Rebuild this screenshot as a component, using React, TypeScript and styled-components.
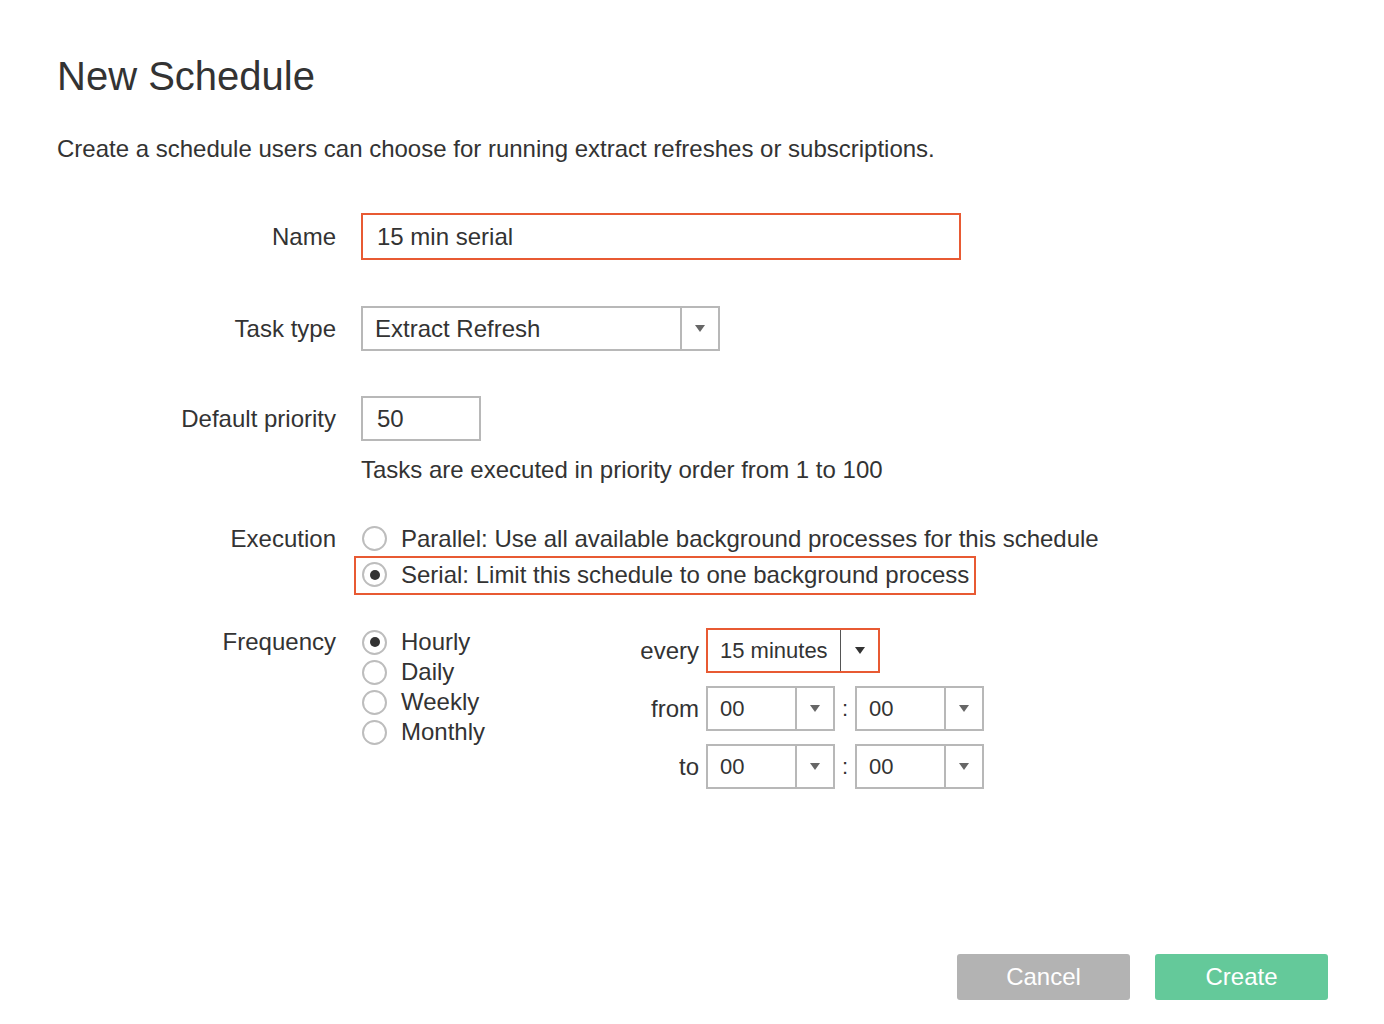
import styled, { createGlobalStyle } from 'styled-components';

const GlobalStyle = createGlobalStyle`
  html, body {
    margin: 0;
    padding: 0;
    background: #fff;
  }
  * {
    box-sizing: border-box;
  }
`;

const Page = styled.div`
  min-height: 100vh;
  display: flex;
  flex-direction: column;
  padding: 52px 56px 24px 57px;
  font-family: 'Liberation Sans', Arial, sans-serif;
  color: #333;
`;

const Title = styled.h1`
  margin: 0;
  font-size: 40px;
  line-height: 48px;
  font-weight: normal;
  color: #333;
`;

const Subtitle = styled.p`
  margin: 35px 0 0;
  font-size: 24px;
  line-height: 28px;
`;

const Form = styled.div`
  display: flex;
  flex-direction: column;
  margin-top: 50px;
`;

const Row = styled.div<{ $top?: number; $align?: string }>`
  display: grid;
  grid-template-columns: 279px 1fr;
  column-gap: 25px;
  align-items: ${({ $align }) => $align || 'center'};
  margin-top: ${({ $top }) => $top ?? 0}px;
`;

const Label = styled.div<{ $lh?: number }>`
  text-align: right;
  font-size: 24px;
  line-height: ${({ $lh }) => $lh || 28}px;
  white-space: nowrap;
`;

const TextBox = styled.div<{ $width: number; $height: number; $highlight?: boolean }>`
  width: ${({ $width }) => $width}px;
  height: ${({ $height }) => $height}px;
  border: 2px solid ${({ $highlight }) => ($highlight ? '#e85a33' : '#b8b8b8')};
  padding: 0 14px;
  display: flex;
  align-items: center;
  font-size: 24px;
  background: #fff;
`;

const Help = styled.div`
  margin-top: 15px;
  font-size: 24px;
  line-height: 28px;
`;

const SelectBox = styled.div<{ $width: number; $highlight?: boolean }>`
  width: ${({ $width }) => $width}px;
  height: 45px;
  display: flex;
  border: 2px solid ${({ $highlight }) => ($highlight ? '#e85a33' : '#b8b8b8')};
  background: #fff;
`;

const SelectValue = styled.div<{ $size: number }>`
  flex: 1;
  display: flex;
  align-items: center;
  padding-left: 12px;
  font-size: ${({ $size }) => $size}px;
`;

const SelectArrow = styled.div<{ $highlight?: boolean }>`
  width: 38px;
  display: flex;
  align-items: center;
  justify-content: center;
  border-left: ${({ $highlight }) => ($highlight ? '1.5px solid #555' : '2px solid #b8b8b8')};

  &::after {
    content: '';
    width: 0;
    height: 0;
    border-left: 5px solid transparent;
    border-right: 5px solid transparent;
    border-top: 7px solid ${({ $highlight }) => ($highlight ? '#333' : '#666')};
  }
`;

const Options = styled.div`
  display: flex;
  flex-direction: column;
  align-items: flex-start;
`;

const Option = styled.div<{ $height: number; $highlight?: boolean }>`
  display: flex;
  align-items: center;
  gap: 14px;
  height: ${({ $height }) => $height}px;
  font-size: 24px;
  white-space: nowrap;
  ${({ $highlight }) =>
    $highlight
      ? `
    border: 2px solid #e85a33;
    margin-left: -7px;
    padding: 0 5px 2px 5px;
  `
      : ''}
`;

const Radio = styled.span<{ $checked?: boolean }>`
  width: 25px;
  height: 25px;
  margin-left: 1px;
  border-radius: 50%;
  border: 2px solid #bdbdbd;
  display: flex;
  align-items: center;
  justify-content: center;
  flex-shrink: 0;

  &::after {
    content: '';
    width: 10px;
    height: 10px;
    border-radius: 50%;
    background: ${({ $checked }) => ($checked ? '#333' : 'transparent')};
  }
`;

const FrequencyBody = styled.div`
  display: flex;
  align-items: flex-start;
`;

const FrequencyList = styled(Options)`
  width: 270px;
`;

const TimeGrid = styled.div`
  display: grid;
  grid-template-columns: 68px auto;
  column-gap: 7px;
  row-gap: 13px;
  align-items: center;
  margin-top: 1px;
`;

const TimeLabel = styled.div`
  text-align: right;
  font-size: 24px;
`;

const TimePair = styled.div`
  display: flex;
  align-items: center;
`;

const Colon = styled.div`
  width: 20px;
  text-align: center;
  font-size: 22px;
`;

const Footer = styled.div`
  margin-top: auto;
  display: flex;
  justify-content: flex-end;
  gap: 25px;
`;

const Button = styled.button<{ $primary?: boolean }>`
  width: 173px;
  height: 46px;
  border: none;
  border-radius: 3px;
  background: ${({ $primary }) => ($primary ? '#64c99a' : '#b3b3b3')};
  color: #fff;
  font-family: 'Liberation Sans', Arial, sans-serif;
  font-size: 24px;
  cursor: pointer;
`;

interface SelectProps {
  value: string;
  width: number;
  size?: number;
  highlight?: boolean;
}

const Select = ({ value, width, size = 24, highlight }: SelectProps) => (
  <SelectBox $width={width} $highlight={highlight}>
    <SelectValue $size={size}>{value}</SelectValue>
    <SelectArrow $highlight={highlight} />
  </SelectBox>
);

const HourMinute = () => (
  <TimePair>
    <Select value="00" width={129} size={22} />
    <Colon>:</Colon>
    <Select value="00" width={129} size={22} />
  </TimePair>
);

const App = () => {
  const frequencies = ['Hourly', 'Daily', 'Weekly', 'Monthly'];

  return (
    <>
      <GlobalStyle />
      <Page>
        <Title>New Schedule</Title>
        <Subtitle>Create a schedule users can choose for running extract refreshes or subscriptions.</Subtitle>
        <Form>
          <Row>
            <Label>Name</Label>
            <TextBox $width={600} $height={47} $highlight>
              15 min serial
            </TextBox>
          </Row>
          <Row $top={46}>
            <Label>Task type</Label>
            <Select value="Extract Refresh" width={359} />
          </Row>
          <Row $top={45}>
            <Label>Default priority</Label>
            <TextBox $width={120} $height={45}>
              50
            </TextBox>
          </Row>
          <Row>
            <div />
            <Help>Tasks are executed in priority order from 1 to 100</Help>
          </Row>
          <Row $top={37} $align="start">
            <Label $lh={35}>Execution</Label>
            <Options>
              <Option $height={35}>
                <Radio />
                Parallel: Use all available background processes for this schedule
              </Option>
              <Option $height={39} $highlight>
                <Radio $checked />
                Serial: Limit this schedule to one background process
              </Option>
            </Options>
          </Row>
          <Row $top={32} $align="start">
            <Label $lh={30}>Frequency</Label>
            <FrequencyBody>
              <FrequencyList>
                {frequencies.map((f, i) => (
                  <Option key={f} $height={30}>
                    <Radio $checked={i === 0} />
                    {f}
                  </Option>
                ))}
              </FrequencyList>
              <TimeGrid>
                <TimeLabel>every</TimeLabel>
                <Select value="15 minutes" width={174} size={22} highlight />
                <TimeLabel>from</TimeLabel>
                <HourMinute />
                <TimeLabel>to</TimeLabel>
                <HourMinute />
              </TimeGrid>
            </FrequencyBody>
          </Row>
        </Form>
        <Footer>
          <Button>Cancel</Button>
          <Button $primary>Create</Button>
        </Footer>
      </Page>
    </>
  );
};

export default App;
